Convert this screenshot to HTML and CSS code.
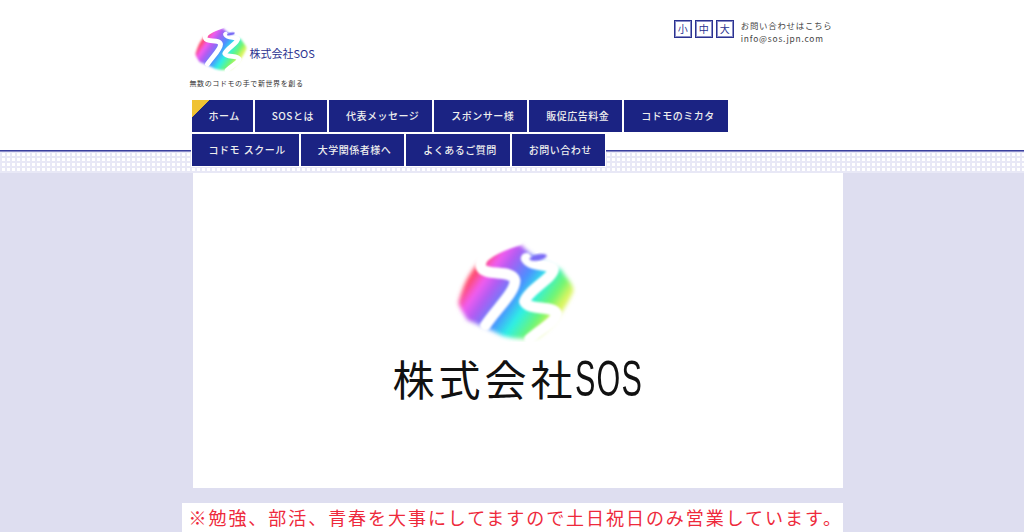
FILE: index.html
```html
<!DOCTYPE html>
<html lang="ja">
<head>
    <meta charset="UTF-8">
    <meta name="viewport" content="width=device-width, initial-scale=1.0">
    <title>株式会社SOS</title>
    <link rel="stylesheet" href="styles.css">
</head>
<body>
    <svg class="defs" width="0" height="0" aria-hidden="true">
        <defs>
            <linearGradient id="rainbow" gradientUnits="userSpaceOnUse" x1="60" y1="200" x2="275" y2="350">
                <stop offset="0" stop-color="#ff4a68"/>
                <stop offset="0.13" stop-color="#f25cf0"/>
                <stop offset="0.26" stop-color="#b05cf2"/>
                <stop offset="0.5" stop-color="#4a90ff"/>
                <stop offset="0.68" stop-color="#2cf0e6"/>
                <stop offset="0.88" stop-color="#70f570"/>
                <stop offset="1" stop-color="#dcf560"/>
            </linearGradient>
            <filter id="soft" x="-10%" y="-10%" width="120%" height="120%">
                <feGaussianBlur stdDeviation="7"/>
            </filter>
            <filter id="softer" x="-10%" y="-10%" width="120%" height="120%">
                <feGaussianBlur stdDeviation="3"/>
            </filter>
            <symbol id="logo" viewBox="40 30 370 310">
                <path d="M56 225 C68 180 88 130 125 100 C165 70 210 48 240 56 C270 90 320 112 358 128 C372 155 396 170 393 192 C372 240 332 298 290 326 C260 334 215 332 185 322 C150 304 110 288 82 276 C72 258 58 240 56 225 Z" fill="url(#rainbow)" filter="url(#soft)"/>
                <g fill="none" stroke="#fff" stroke-linecap="round" stroke-linejoin="round" filter="url(#softer)">
                    <path d="M232 40 C170 62 112 86 122 120 C132 150 215 125 222 160 C222 195 170 240 135 292" stroke-width="32"/>
                    <path d="M255 95 C272 122 318 108 335 125 C338 150 258 190 250 222 C262 250 335 232 345 258 C340 285 300 300 265 332" stroke-width="32"/>
                    <ellipse cx="290" cy="92" rx="38" ry="22"/>
                </g>
                <ellipse cx="290" cy="92" rx="26" ry="9" fill="#7a6cf5" transform="rotate(-12 290 92)" filter="url(#softer)"/>
            </symbol>
        </defs>
    </svg>

    <header class="site-header">
        <div class="wrap">
            <div class="header-top">
                <div class="brand">
                    <div class="brand-row">
                        <svg class="brand-logo"><use href="#logo"/></svg>
                        <span class="brand-name">株式会社SOS</span>
                    </div>
                    <p class="tagline">無数のコドモの手で新世界を創る</p>
                </div>
                <div class="header-side">
                    <div class="size-buttons">
                        <span class="size-btn">小</span>
                        <span class="size-btn">中</span>
                        <span class="size-btn">大</span>
                    </div>
                    <div class="contact">
                        <p>お問い合わせはこちら</p>
                        <p>info@sos.jpn.com</p>
                    </div>
                </div>
            </div>
            <nav class="global-nav">
                <a class="nav-item nav-home" href="#">ホーム</a>
                <a class="nav-item" href="#">SOSとは</a>
                <a class="nav-item" href="#">代表メッセージ</a>
                <a class="nav-item" href="#">スポンサー様</a>
                <a class="nav-item" href="#">販促広告料金</a>
                <a class="nav-item" href="#">コドモのミカタ</a>
                <a class="nav-item" href="#">コドモ スクール</a>
                <a class="nav-item" href="#">大学関係者様へ</a>
                <a class="nav-item" href="#">よくあるご質問</a>
                <a class="nav-item" href="#">お問い合わせ</a>
            </nav>
        </div>
    </header>
    <div class="dot-band"></div>

    <main class="wrap">
        <section class="hero">
            <svg class="hero-logo"><use href="#logo"/></svg>
            <h1 class="hero-name">株式会社<span class="hero-latin"><span class="hero-latin-text">SOS</span></span></h1>
        </section>
        <p class="notice">※勉強、部活、青春を大事にしてますので土日祝日のみ営業しています。</p>
    </main>
</body>
</html>
```

FILE: styles.css
```css
body {
    margin: 0;
    height: 532px;
    overflow: hidden;
    background-color: #dedef0;
    font-family: "Noto Sans CJK JP", "Noto Sans", sans-serif;
}
p, h1 {
    margin: 0;
}
.defs {
    display: block;
    height: 0;
}
.wrap {
    width: 661px;
    margin: 0 auto;
}

/* header */
.site-header {
    height: 150px;
    background: white;
}
.header-top {
    display: flex;
    justify-content: space-between;
    height: 100px;
}
.brand {
    padding-left: 8px;
}
.brand-row {
    display: flex;
    align-items: flex-end;
    height: 72px;
    padding-left: 3px;
}
.brand-logo {
    width: 56px;
    height: 48px;
}
.brand-name {
    margin-bottom: 12px;
    margin-left: 1px;
    color: #2b3290;
    font-size: 11px;
    line-height: 14px;
}
.tagline {
    margin-top: 5px;
    color: #333;
    font-size: 7px;
    line-height: 12px;
    letter-spacing: 0.6px;
}
.header-side {
    display: flex;
    gap: 7px;
    padding-top: 19px;
    padding-right: 10px;
}
.size-buttons {
    display: flex;
    gap: 3px;
    padding-top: 1px;
}
.size-btn {
    box-sizing: border-box;
    width: 18px;
    height: 18px;
    border: 1px solid #2b3290;
    outline: 1px solid #8a8ec8;
    outline-offset: -2px;
    color: #2b3290;
    font-size: 10px;
    line-height: 16px;
    text-align: center;
}
.contact {
    color: #444;
    font-size: 8.4px;
    line-height: 13px;
    letter-spacing: 0.8px;
}

/* nav */
.global-nav {
    position: relative;
    z-index: 1;
    display: flex;
    flex-wrap: wrap;
    gap: 2px;
    width: 600px;
    margin-left: 10px;
}
.nav-item {
    height: 32px;
    padding: 0 13px 0 17px;
    background-color: #1b2383;
    box-shadow: 0 0 0 1px white;
    color: #eee;
    font-size: 10px;
    font-weight: 500;
    line-height: 32px;
    letter-spacing: 0.5px;
    word-spacing: 1px;
    text-decoration: none;
}
.nav-home {
    background-image: linear-gradient(135deg, #f0c232 12px, #1b2383 12.5px);
}

/* dot band under the header */
.dot-band {
    box-sizing: border-box;
    height: 23px;
    border-top: 1px solid #3a3f9e;
    background-color: white;
    background-image:
        linear-gradient(#8a8cc8 1px, transparent 1px),
        linear-gradient(90deg, #e8e8f6 2px, transparent 2px),
        linear-gradient(#e8e8f6 2px, transparent 2px);
    background-size: 100% 100%, 5px 5px, 5px 5px;
}

/* main */
.hero {
    display: flex;
    flex-direction: column;
    align-items: center;
    height: 315px;
    margin-left: 11px;
    padding-top: 63px;
    box-sizing: border-box;
    background: white;
}
.hero-logo {
    width: 126px;
    height: 106px;
    margin-right: 4px;
}
.hero-name {
    margin-top: 6px;
    color: #111;
    font-size: 42px;
    font-weight: 400;
    line-height: 60px;
    letter-spacing: 4px;
    white-space: nowrap;
}
.hero-latin {
    display: inline-block;
    width: 68px;
    margin-left: -2px;
    vertical-align: top;
}
/* no narrow face installed, so squeeze the latin letters */
.hero-latin-text {
    display: inline-block;
    font-family: "Liberation Sans", sans-serif;
    font-size: 50px;
    letter-spacing: 2px;
    transform: scaleX(0.61);
    transform-origin: left center;
}
.notice {
    height: 29px;
    margin-top: 15px;
    padding-left: 7px;
    background: white;
    color: #ee2a3c;
    font-size: 18px;
    line-height: 29px;
    letter-spacing: 1.95px;
    white-space: nowrap;
    overflow: hidden;
}
```
